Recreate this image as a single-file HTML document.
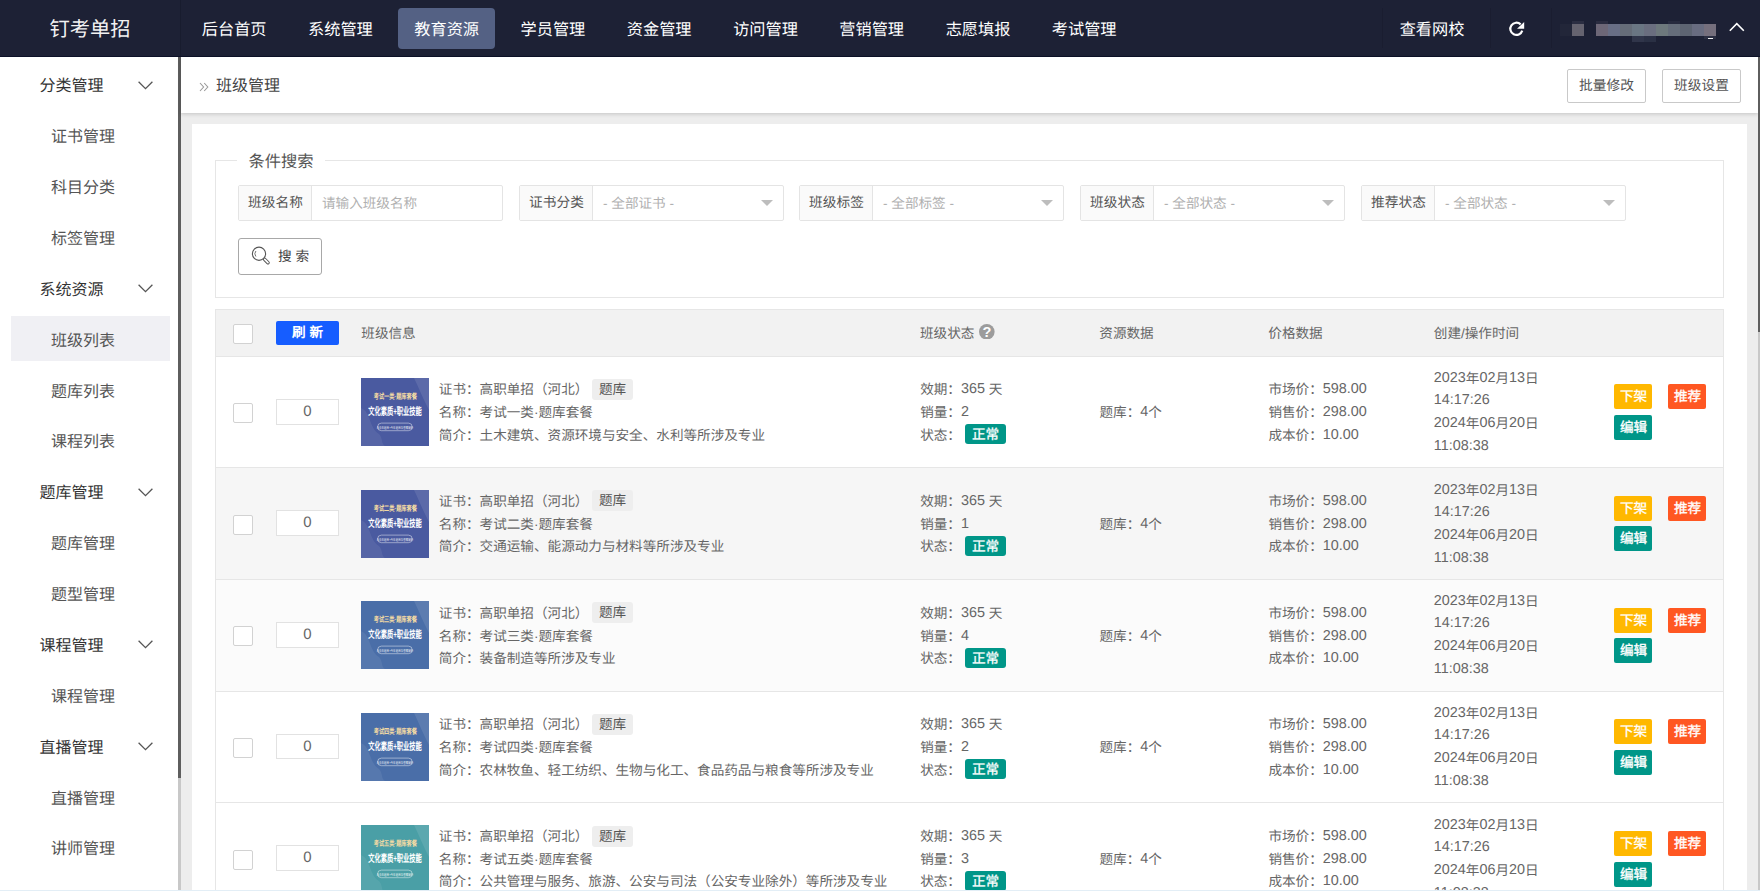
<!DOCTYPE html><html lang="zh-CN"><head><meta charset="utf-8"><title>班级管理</title><style>
*{box-sizing:border-box;margin:0;padding:0}
html,body{width:1760px;height:891px;overflow:hidden}
body{position:relative;background:#ededed;font-family:"Liberation Sans",sans-serif;font-size:13.6px;color:#666;text-rendering:geometricPrecision}
.abs{position:absolute}
/* header */
#hd{position:absolute;left:0;top:0;width:1760px;height:57px;background:#1d2135;border-bottom:1px solid #0c1128;color:#fff}
#logo{position:absolute;left:0;top:2px;width:180px;height:56px;line-height:57px;text-align:center;font-size:20.3px;color:#f2f2f2}
.nav{position:absolute;top:8px;height:41px;width:97px;text-align:center;font-size:16.2px;color:#fff;border-radius:4px;white-space:nowrap}
.nav span{position:relative;top:1px;line-height:42px;display:block}
.nav.on{background:#546184}
/* sidebar */
#sb{position:absolute;left:0;top:57px;width:178px;height:834px;background:#fff}
.g,.s{position:absolute;left:0;height:46px;line-height:46px;font-size:16px;white-space:nowrap}
.g{color:#333;padding-left:39.5px;width:178px}
.s{color:#555;padding-left:51px;width:178px}
.on .tx,.g .tx,.s .tx{position:relative}
.sa{position:absolute;left:11px;width:159px;height:46px;background:#f0f0f4}
.chev{position:absolute;left:137.5px}
/* breadcrumb */
#bc{position:absolute;left:181px;top:57px;width:1577px;height:56px;background:#fff;box-shadow:0 1px 4px rgba(0,0,0,.18)}
.btn{position:absolute;top:12px;height:34px;line-height:32px;border:1px solid #c9c9c9;border-radius:2px;background:#fff;color:#555;font-size:13.7px;text-align:center;white-space:nowrap}
/* card */
#card{position:absolute;left:192px;top:124px;width:1555px;height:780px;background:#fff}
#fs{position:absolute;left:215px;top:160px;width:1509px;height:138px;border:1px solid #e6e6e6}
#lg{position:absolute;left:237px;top:151px;width:88px;height:22px;background:#fff;font-size:16.3px;line-height:22px;text-align:center;color:#555;white-space:nowrap}
.ig{position:absolute;top:185px;width:265px;height:36px;border:1px solid #e4e4e4;border-radius:2px;background:#fff}
.ig .lb{position:absolute;left:0;top:0;width:73px;height:34px;line-height:33px;background:#fafafa;border-right:1px solid #e4e4e4;text-align:center;color:#555;font-size:13.7px;white-space:nowrap;padding-left:1px}
.ig .ph{position:absolute;left:83px;top:1px;height:34px;line-height:34px;color:#b0b0b0;font-size:13.6px;white-space:nowrap}
.ig .tri{position:absolute;right:10px;top:14px;width:0;height:0;border-left:6px solid transparent;border-right:6px solid transparent;border-top:6.5px solid #bdbdbd}
#sbtn{position:absolute;left:238px;top:238px;width:84px;height:37px;border:1px solid #a8a8a8;border-radius:3px;background:#fff;color:#444}
/* table */
#tb{position:absolute;left:215px;top:309px;width:1509px;height:600px;border:1px solid #e6e6e6;border-bottom:0}
#th{position:absolute;left:216px;top:310px;width:1507px;height:46px;background:#f2f2f2}
.hl{position:absolute;top:311px;height:46px;line-height:46px;color:#666;font-size:13.6px;white-space:nowrap}
.row{position:absolute;left:216px;width:1507px;border-top:1px solid #e6e6e6}
.cb{position:absolute;left:233px;width:20px;height:20px;border:1px solid #d2d2d2;border-radius:2px;background:#fff}
.num{position:absolute;left:276px;width:63px;height:26px;border:1px solid #e2e2e2;background:#fff;text-align:center;line-height:24px;font-size:15px;color:#666}
.thumb{position:absolute;left:361px;width:68px;height:68px;overflow:hidden}
.ln{position:absolute;white-space:nowrap;height:22px;line-height:22px;font-size:13.6px;color:#666}
.n{font-size:14.4px;position:relative;top:-1px}
.tag{position:absolute;height:21px;line-height:21px;width:41px;text-align:center;background:#eee;border-radius:3px;color:#555;font-size:13.6px;white-space:nowrap}
.bd{position:absolute;height:20px;line-height:21px;width:41px;text-align:center;background:#009688;border-radius:3px;color:#fff;font-size:13.6px;white-space:nowrap;-webkit-text-stroke:.3px #fff}
.ab{position:absolute;width:38px;height:25px;line-height:25px;text-align:center;border-radius:2px;color:#fff;font-size:13.6px;-webkit-text-stroke:.35px #fff;white-space:nowrap;padding-left:1px}
</style></head><body>
<div id="hd">
<div id="logo">钉考单招</div>
<div class="abs" style="left:180px;top:0;width:1px;height:56px;background:#181c2e"></div>
<div class="abs" style="left:1382px;top:8px;width:1px;height:40px;background:#1a1d30"></div>
<div class="abs" style="left:1490px;top:8px;width:1px;height:40px;background:#1a1d30"></div>
<div class="abs" style="left:1551px;top:8px;width:1px;height:40px;background:#1a1d30"></div>
<div class="nav" style="left:185.7px"><span>后台首页</span></div>
<div class="nav" style="left:291.9px"><span>系统管理</span></div>
<div class="nav on" style="left:398.2px"><span>教育资源</span></div>
<div class="nav" style="left:504.4px"><span>学员管理</span></div>
<div class="nav" style="left:610.7px"><span>资金管理</span></div>
<div class="nav" style="left:717.0px"><span>访问管理</span></div>
<div class="nav" style="left:823.2px"><span>营销管理</span></div>
<div class="nav" style="left:929.5px"><span>志愿填报</span></div>
<div class="nav" style="left:1035.7px"><span>考试管理</span></div>
<div class="nav" style="left:1383.5px"><span>查看网校</span></div>
<svg class="abs" style="left:1508px;top:20px" width="17" height="17" viewBox="0 0 17 17"><path d="M12.64 4.41 A6.1 6.1 0 1 0 14.23 10.58" fill="none" stroke="#fff" stroke-width="2.2"/><path d="M9 8.7 L16.2 8.7 L16.2 2 Z" fill="#fff"/></svg>
<div class="abs" style="left:1560px;top:24px;width:12px;height:12px;background:#222639"></div>
<div class="abs" style="left:1572px;top:21px;width:12px;height:3px;background:#2b2e42"></div>
<div class="abs" style="left:1572px;top:24px;width:12px;height:12px;background:#65636f"></div>
<div class="abs" style="left:1596px;top:21px;width:12px;height:3px;background:#2a2c40"></div>
<div class="abs" style="left:1668px;top:21px;width:12px;height:3px;background:#262a3e"></div>
<div class="abs" style="left:1596px;top:24px;width:120px;height:12px;background:linear-gradient(90deg,#6d6777 0px,#6d6777 12px,#686e85 12px,#686e85 24px,#656c78 24px,#656c78 36px,#6a7683 36px,#6a7683 48px,#6a6e7f 48px,#6a6e7f 60px,#6d787c 60px,#6d787c 72px,#656d7a 72px,#656d7a 84px,#5d6472 84px,#5d6472 96px,#686c80 96px,#686c80 108px,#756f7d 108px,#756f7d 120px)"></div>
<div class="abs" style="left:1632px;top:36px;width:12px;height:6px;background:#30354a"></div>
<div class="abs" style="left:1644px;top:36px;width:12px;height:6px;background:#2a3044"></div>
<div class="abs" style="left:1704px;top:36px;width:12px;height:3px;background:#2a2e42"></div>
<div class="abs" style="left:1708px;top:38px;width:5px;height:1px;background:#f4f4f4"></div>
<svg class="abs" style="left:1729px;top:22px" width="16" height="10" viewBox="0 0 16 10"><path d="M0.8 8.8 L7.8 1.6 L14.8 8.8" fill="none" stroke="#fff" stroke-width="1.6"/></svg>
</div>
<div id="sb">
<div class="g" style="top:7px">分类管理</div>
<svg class="chev" style="top:24px" width="15" height="9" viewBox="0 0 15 9"><path d="M0.6 0.8 L7.5 7.6 L14.4 0.8" fill="none" stroke="#555" stroke-width="1.3"/></svg>
<div class="s" style="top:58px">证书管理</div>
<div class="s" style="top:109px">科目分类</div>
<div class="s" style="top:160px">标签管理</div>
<div class="g" style="top:211px">系统资源</div>
<svg class="chev" style="top:227px" width="15" height="9" viewBox="0 0 15 9"><path d="M0.6 0.8 L7.5 7.6 L14.4 0.8" fill="none" stroke="#555" stroke-width="1.3"/></svg>
<div class="sa" style="top:259px;height:45px"></div>
<div class="s" style="top:262px">班级列表</div>
<div class="s" style="top:313px">题库列表</div>
<div class="s" style="top:363px">课程列表</div>
<div class="g" style="top:414px">题库管理</div>
<svg class="chev" style="top:431px" width="15" height="9" viewBox="0 0 15 9"><path d="M0.6 0.8 L7.5 7.6 L14.4 0.8" fill="none" stroke="#555" stroke-width="1.3"/></svg>
<div class="s" style="top:465px">题库管理</div>
<div class="s" style="top:516px">题型管理</div>
<div class="g" style="top:567px">课程管理</div>
<svg class="chev" style="top:583px" width="15" height="9" viewBox="0 0 15 9"><path d="M0.6 0.8 L7.5 7.6 L14.4 0.8" fill="none" stroke="#555" stroke-width="1.3"/></svg>
<div class="s" style="top:618px">课程管理</div>
<div class="g" style="top:669px">直播管理</div>
<svg class="chev" style="top:685px" width="15" height="9" viewBox="0 0 15 9"><path d="M0.6 0.8 L7.5 7.6 L14.4 0.8" fill="none" stroke="#555" stroke-width="1.3"/></svg>
<div class="s" style="top:720px">直播管理</div>
<div class="s" style="top:770px">讲师管理</div>
</div>
<div class="abs" style="left:178px;top:57px;width:3px;height:834px;background:#c8c8c8"></div>
<div class="abs" style="left:178px;top:57px;width:3px;height:721px;background:#5e5e5e"></div>
<div id="bc">
<svg class="abs" style="left:18px;top:25px" width="10" height="10" viewBox="0 0 10 10"><path d="M1 1 L4.6 5 L1 9 M5.2 1 L8.8 5 L5.2 9" fill="none" stroke="#999" stroke-width="1.1"/></svg>
<div class="abs" style="left:35px;top:1px;height:56px;line-height:57px;font-size:16px;color:#444;white-space:nowrap">班级管理</div>
<div class="btn" style="left:1386px;width:79px">批量修改</div>
<div class="btn" style="left:1481px;width:79px">班级设置</div>
</div>
<div class="abs" style="left:1758px;top:57px;width:2px;height:834px;background:#c8c8c8"></div>
<div class="abs" style="left:1758px;top:57px;width:2px;height:275px;background:#5e5e5e"></div>
<div id="card"></div>
<div id="fs"></div><div id="lg">条件搜索</div>
<div class="ig" style="left:238px"><div class="lb">班级名称</div><div class="ph">请输入班级名称</div></div>
<div class="ig" style="left:519px"><div class="lb">证书分类</div><div class="ph">- 全部证书 -</div><div class="tri"></div></div>
<div class="ig" style="left:799px"><div class="lb">班级标签</div><div class="ph">- 全部标签 -</div><div class="tri"></div></div>
<div class="ig" style="left:1080px"><div class="lb">班级状态</div><div class="ph">- 全部状态 -</div><div class="tri"></div></div>
<div class="ig" style="left:1361px"><div class="lb">推荐状态</div><div class="ph">- 全部状态 -</div><div class="tri"></div></div>
<div id="sbtn"><svg class="abs" style="left:12px;top:7.4px" width="20" height="20" viewBox="0 0 20 20"><circle cx="8" cy="7.75" r="6.6" fill="none" stroke="#555" stroke-width="1.1"/><rect x="0" y="-1.3" width="7.2" height="2.6" rx="1.3" transform="translate(12.8 12.5) rotate(45)" fill="#fff" stroke="#555" stroke-width="1"/><path d="M4.9 5 A4.4 4.4 0 0 0 4.9 10.5" fill="none" stroke="#666" stroke-width=".9"/></svg><div class="abs" style="left:39px;top:0;height:35px;line-height:35px;font-size:13.7px;white-space:nowrap">搜 索</div></div>
<div id="tb"></div><div id="th"></div>
<div class="cb" style="top:324px"></div>
<div class="abs" style="left:276px;top:321px;width:63px;height:24px;line-height:24px;background:#165dff;border-radius:2px;color:#fff;font-weight:bold;font-size:13.6px;text-align:center;white-space:nowrap">刷 新</div>
<div class="hl" style="left:361.3px">班级信息</div>
<div class="hl" style="left:920px">班级状态</div>
<svg class="abs" style="left:979.4px;top:323.6px" width="15.6" height="15.6" viewBox="0 0 15.6 15.6"><circle cx="7.8" cy="7.8" r="7.8" fill="#9c9c9c"/><text x="7.9" y="13" font-size="14.5" font-weight="bold" fill="#fff" text-anchor="middle" font-family="Liberation Sans, sans-serif">?</text></svg>
<div class="hl" style="left:1099.3px">资源数据</div>
<div class="hl" style="left:1268.3px">价格数据</div>
<div class="hl" style="left:1433.8px">创建/操作时间</div>
<div class="row" style="top:356px;height:111px;background:#fff"></div>
<div class="cb" style="top:403px"></div>
<div class="num" style="top:399px;height:26px">0</div>
<svg class="thumb" style="top:378px" width="68" height="68" viewBox="0 0 68 68"><rect width="68" height="68" fill="#4a5aa0"/><path d="M53 0 C57 8 60 16 64 24 L68 32 L68 0 Z" fill="#fff" fill-opacity=".10"/><path d="M0 30 C10 34 8 50 18 56 C22 60 20 66 24 68 L0 68 Z" fill="#fff" fill-opacity=".07"/><g font-family="Liberation Sans, sans-serif" text-anchor="middle"><text transform="translate(34.3 20.9) scale(.68 1)" font-size="7.6" font-weight="bold" fill="#f1d9a4">考试一类·题库套餐</text><text transform="translate(34 36.5) scale(.59 1)" font-size="10.6" font-weight="bold" fill="#fff">文化素质+职业技能</text><rect x="16.6" y="45.1" width="34.6" height="7.6" rx="3.8" fill="none" stroke="#fff" stroke-opacity=".75" stroke-width=".6"/><text transform="translate(33.9 50.9) scale(.7 1)" font-size="3.6" fill="#fff" fill-opacity=".9">含去年题库+今年题库及答案解析</text></g></svg>
<div class="ln" style="left:438.8px;top:379px">证书：高职单招（河北）</div>
<div class="tag" style="left:592px;top:379px">题库</div>
<div class="ln" style="left:438.8px;top:402px">名称：考试一类·题库套餐</div>
<div class="ln" style="left:438.8px;top:425px">简介：土木建筑、资源环境与安全、水利等所涉及专业</div>
<div class="ln" style="left:920.2px;top:379px">效期：<span class="n">365</span> 天</div>
<div class="ln" style="left:920.2px;top:402px">销量：<span class="n">2</span></div>
<div class="ln" style="left:920.2px;top:425px">状态：</div>
<div class="bd" style="left:965px;top:424px">正常</div>
<div class="ln" style="left:1099.5px;top:402px">题库：<span class="n">4</span>个</div>
<div class="ln" style="left:1268.4px;top:379px">市场价：<span class="n">598.00</span></div>
<div class="ln" style="left:1268.4px;top:402px">销售价：<span class="n">298.00</span></div>
<div class="ln" style="left:1268.4px;top:425px">成本价：<span class="n">10.00</span></div>
<div class="ln" style="left:1433.8px;top:368px"><span class="n">2023</span>年<span class="n">02</span>月<span class="n">13</span>日</div>
<div class="ln" style="left:1433.8px;top:390px"><span class="n">14:17:26</span></div>
<div class="ln" style="left:1433.8px;top:413px"><span class="n">2024</span>年<span class="n">06</span>月<span class="n">20</span>日</div>
<div class="ln" style="left:1433.8px;top:436px"><span class="n">11:08:38</span></div>
<div class="ab" style="left:1614px;top:384px;background:#ffb800">下架</div>
<div class="ab" style="left:1668px;top:384px;background:#ff5722">推荐</div>
<div class="ab" style="left:1614px;top:415px;background:#009688">编辑</div>
<div class="row" style="top:467px;height:112px;background:#f6f6f6"></div>
<div class="cb" style="top:515px"></div>
<div class="num" style="top:510px;height:26px">0</div>
<svg class="thumb" style="top:490px" width="68" height="68" viewBox="0 0 68 68"><rect width="68" height="68" fill="#4a5aa0"/><path d="M53 0 C57 8 60 16 64 24 L68 32 L68 0 Z" fill="#fff" fill-opacity=".10"/><path d="M0 30 C10 34 8 50 18 56 C22 60 20 66 24 68 L0 68 Z" fill="#fff" fill-opacity=".07"/><g font-family="Liberation Sans, sans-serif" text-anchor="middle"><text transform="translate(34.3 20.9) scale(.68 1)" font-size="7.6" font-weight="bold" fill="#f1d9a4">考试二类·题库套餐</text><text transform="translate(34 36.5) scale(.59 1)" font-size="10.6" font-weight="bold" fill="#fff">文化素质+职业技能</text><rect x="16.6" y="45.1" width="34.6" height="7.6" rx="3.8" fill="none" stroke="#fff" stroke-opacity=".75" stroke-width=".6"/><text transform="translate(33.9 50.9) scale(.7 1)" font-size="3.6" fill="#fff" fill-opacity=".9">含去年题库+今年题库及答案解析</text></g></svg>
<div class="ln" style="left:438.8px;top:491px">证书：高职单招（河北）</div>
<div class="tag" style="left:592px;top:490px">题库</div>
<div class="ln" style="left:438.8px;top:514px">名称：考试二类·题库套餐</div>
<div class="ln" style="left:438.8px;top:536px">简介：交通运输、能源动力与材料等所涉及专业</div>
<div class="ln" style="left:920.2px;top:491px">效期：<span class="n">365</span> 天</div>
<div class="ln" style="left:920.2px;top:514px">销量：<span class="n">1</span></div>
<div class="ln" style="left:920.2px;top:536px">状态：</div>
<div class="bd" style="left:965px;top:536px">正常</div>
<div class="ln" style="left:1099.5px;top:514px">题库：<span class="n">4</span>个</div>
<div class="ln" style="left:1268.4px;top:491px">市场价：<span class="n">598.00</span></div>
<div class="ln" style="left:1268.4px;top:514px">销售价：<span class="n">298.00</span></div>
<div class="ln" style="left:1268.4px;top:536px">成本价：<span class="n">10.00</span></div>
<div class="ln" style="left:1433.8px;top:480px"><span class="n">2023</span>年<span class="n">02</span>月<span class="n">13</span>日</div>
<div class="ln" style="left:1433.8px;top:502px"><span class="n">14:17:26</span></div>
<div class="ln" style="left:1433.8px;top:525px"><span class="n">2024</span>年<span class="n">06</span>月<span class="n">20</span>日</div>
<div class="ln" style="left:1433.8px;top:548px"><span class="n">11:08:38</span></div>
<div class="ab" style="left:1614px;top:496px;background:#ffb800">下架</div>
<div class="ab" style="left:1668px;top:496px;background:#ff5722">推荐</div>
<div class="ab" style="left:1614px;top:526px;background:#009688">编辑</div>
<div class="row" style="top:579px;height:112px;background:#fbfbfb"></div>
<div class="cb" style="top:626px"></div>
<div class="num" style="top:622px;height:26px">0</div>
<svg class="thumb" style="top:601px" width="68" height="68" viewBox="0 0 68 68"><rect width="68" height="68" fill="#4a6ea8"/><path d="M53 0 C57 8 60 16 64 24 L68 32 L68 0 Z" fill="#fff" fill-opacity=".10"/><path d="M0 30 C10 34 8 50 18 56 C22 60 20 66 24 68 L0 68 Z" fill="#fff" fill-opacity=".07"/><g font-family="Liberation Sans, sans-serif" text-anchor="middle"><text transform="translate(34.3 20.9) scale(.68 1)" font-size="7.6" font-weight="bold" fill="#f1d9a4">考试三类·题库套餐</text><text transform="translate(34 36.5) scale(.59 1)" font-size="10.6" font-weight="bold" fill="#fff">文化素质+职业技能</text><rect x="16.6" y="45.1" width="34.6" height="7.6" rx="3.8" fill="none" stroke="#fff" stroke-opacity=".75" stroke-width=".6"/><text transform="translate(33.9 50.9) scale(.7 1)" font-size="3.6" fill="#fff" fill-opacity=".9">含去年题库+今年题库及答案解析</text></g></svg>
<div class="ln" style="left:438.8px;top:603px">证书：高职单招（河北）</div>
<div class="tag" style="left:592px;top:602px">题库</div>
<div class="ln" style="left:438.8px;top:626px">名称：考试三类·题库套餐</div>
<div class="ln" style="left:438.8px;top:648px">简介：装备制造等所涉及专业</div>
<div class="ln" style="left:920.2px;top:603px">效期：<span class="n">365</span> 天</div>
<div class="ln" style="left:920.2px;top:626px">销量：<span class="n">4</span></div>
<div class="ln" style="left:920.2px;top:648px">状态：</div>
<div class="bd" style="left:965px;top:648px">正常</div>
<div class="ln" style="left:1099.5px;top:626px">题库：<span class="n">4</span>个</div>
<div class="ln" style="left:1268.4px;top:603px">市场价：<span class="n">598.00</span></div>
<div class="ln" style="left:1268.4px;top:626px">销售价：<span class="n">298.00</span></div>
<div class="ln" style="left:1268.4px;top:648px">成本价：<span class="n">10.00</span></div>
<div class="ln" style="left:1433.8px;top:591px"><span class="n">2023</span>年<span class="n">02</span>月<span class="n">13</span>日</div>
<div class="ln" style="left:1433.8px;top:613px"><span class="n">14:17:26</span></div>
<div class="ln" style="left:1433.8px;top:636px"><span class="n">2024</span>年<span class="n">06</span>月<span class="n">20</span>日</div>
<div class="ln" style="left:1433.8px;top:659px"><span class="n">11:08:38</span></div>
<div class="ab" style="left:1614px;top:608px;background:#ffb800">下架</div>
<div class="ab" style="left:1668px;top:608px;background:#ff5722">推荐</div>
<div class="ab" style="left:1614px;top:638px;background:#009688">编辑</div>
<div class="row" style="top:691px;height:111px;background:#fff"></div>
<div class="cb" style="top:738px"></div>
<div class="num" style="top:734px;height:25px">0</div>
<svg class="thumb" style="top:713px" width="68" height="68" viewBox="0 0 68 68"><rect width="68" height="68" fill="#4a6ea8"/><path d="M53 0 C57 8 60 16 64 24 L68 32 L68 0 Z" fill="#fff" fill-opacity=".10"/><path d="M0 30 C10 34 8 50 18 56 C22 60 20 66 24 68 L0 68 Z" fill="#fff" fill-opacity=".07"/><g font-family="Liberation Sans, sans-serif" text-anchor="middle"><text transform="translate(34.3 20.9) scale(.68 1)" font-size="7.6" font-weight="bold" fill="#f1d9a4">考试四类·题库套餐</text><text transform="translate(34 36.5) scale(.59 1)" font-size="10.6" font-weight="bold" fill="#fff">文化素质+职业技能</text><rect x="16.6" y="45.1" width="34.6" height="7.6" rx="3.8" fill="none" stroke="#fff" stroke-opacity=".75" stroke-width=".6"/><text transform="translate(33.9 50.9) scale(.7 1)" font-size="3.6" fill="#fff" fill-opacity=".9">含去年题库+今年题库及答案解析</text></g></svg>
<div class="ln" style="left:438.8px;top:714px">证书：高职单招（河北）</div>
<div class="tag" style="left:592px;top:714px">题库</div>
<div class="ln" style="left:438.8px;top:737px">名称：考试四类·题库套餐</div>
<div class="ln" style="left:438.8px;top:760px">简介：农林牧鱼、轻工纺织、生物与化工、食品药品与粮食等所涉及专业</div>
<div class="ln" style="left:920.2px;top:714px">效期：<span class="n">365</span> 天</div>
<div class="ln" style="left:920.2px;top:737px">销量：<span class="n">2</span></div>
<div class="ln" style="left:920.2px;top:760px">状态：</div>
<div class="bd" style="left:965px;top:759px">正常</div>
<div class="ln" style="left:1099.5px;top:737px">题库：<span class="n">4</span>个</div>
<div class="ln" style="left:1268.4px;top:714px">市场价：<span class="n">598.00</span></div>
<div class="ln" style="left:1268.4px;top:737px">销售价：<span class="n">298.00</span></div>
<div class="ln" style="left:1268.4px;top:760px">成本价：<span class="n">10.00</span></div>
<div class="ln" style="left:1433.8px;top:703px"><span class="n">2023</span>年<span class="n">02</span>月<span class="n">13</span>日</div>
<div class="ln" style="left:1433.8px;top:725px"><span class="n">14:17:26</span></div>
<div class="ln" style="left:1433.8px;top:748px"><span class="n">2024</span>年<span class="n">06</span>月<span class="n">20</span>日</div>
<div class="ln" style="left:1433.8px;top:771px"><span class="n">11:08:38</span></div>
<div class="ab" style="left:1614px;top:719px;background:#ffb800">下架</div>
<div class="ab" style="left:1668px;top:719px;background:#ff5722">推荐</div>
<div class="ab" style="left:1614px;top:750px;background:#009688">编辑</div>
<div class="row" style="top:802px;height:100px;background:#fff"></div>
<div class="cb" style="top:850px"></div>
<div class="num" style="top:845px;height:26px">0</div>
<svg class="thumb" style="top:825px" width="68" height="68" viewBox="0 0 68 68"><rect width="68" height="68" fill="#4a9fa6"/><path d="M53 0 C57 8 60 16 64 24 L68 32 L68 0 Z" fill="#fff" fill-opacity=".10"/><path d="M0 30 C10 34 8 50 18 56 C22 60 20 66 24 68 L0 68 Z" fill="#fff" fill-opacity=".07"/><g font-family="Liberation Sans, sans-serif" text-anchor="middle"><text transform="translate(34.3 20.9) scale(.68 1)" font-size="7.6" font-weight="bold" fill="#f1d9a4">考试五类·题库套餐</text><text transform="translate(34 36.5) scale(.59 1)" font-size="10.6" font-weight="bold" fill="#fff">文化素质+职业技能</text><rect x="16.6" y="45.1" width="34.6" height="7.6" rx="3.8" fill="none" stroke="#fff" stroke-opacity=".75" stroke-width=".6"/><text transform="translate(33.9 50.9) scale(.7 1)" font-size="3.6" fill="#fff" fill-opacity=".9">含去年题库+今年题库及答案解析</text></g></svg>
<div class="ln" style="left:438.8px;top:826px">证书：高职单招（河北）</div>
<div class="tag" style="left:592px;top:826px">题库</div>
<div class="ln" style="left:438.8px;top:849px">名称：考试五类·题库套餐</div>
<div class="ln" style="left:438.8px;top:871px">简介：公共管理与服务、旅游、公安与司法（公安专业除外）等所涉及专业</div>
<div class="ln" style="left:920.2px;top:826px">效期：<span class="n">365</span> 天</div>
<div class="ln" style="left:920.2px;top:849px">销量：<span class="n">3</span></div>
<div class="ln" style="left:920.2px;top:871px">状态：</div>
<div class="bd" style="left:965px;top:871px">正常</div>
<div class="ln" style="left:1099.5px;top:849px">题库：<span class="n">4</span>个</div>
<div class="ln" style="left:1268.4px;top:826px">市场价：<span class="n">598.00</span></div>
<div class="ln" style="left:1268.4px;top:849px">销售价：<span class="n">298.00</span></div>
<div class="ln" style="left:1268.4px;top:871px">成本价：<span class="n">10.00</span></div>
<div class="ln" style="left:1433.8px;top:815px"><span class="n">2023</span>年<span class="n">02</span>月<span class="n">13</span>日</div>
<div class="ln" style="left:1433.8px;top:837px"><span class="n">14:17:26</span></div>
<div class="ln" style="left:1433.8px;top:860px"><span class="n">2024</span>年<span class="n">06</span>月<span class="n">20</span>日</div>
<div class="ln" style="left:1433.8px;top:883px"><span class="n">11:08:38</span></div>
<div class="ab" style="left:1614px;top:831px;background:#ffb800">下架</div>
<div class="ab" style="left:1668px;top:831px;background:#ff5722">推荐</div>
<div class="ab" style="left:1614px;top:862px;background:#009688">编辑</div>
<div class="abs" style="left:0;top:890px;width:1760px;height:1px;background:#e3eef6"></div>
</body></html>
